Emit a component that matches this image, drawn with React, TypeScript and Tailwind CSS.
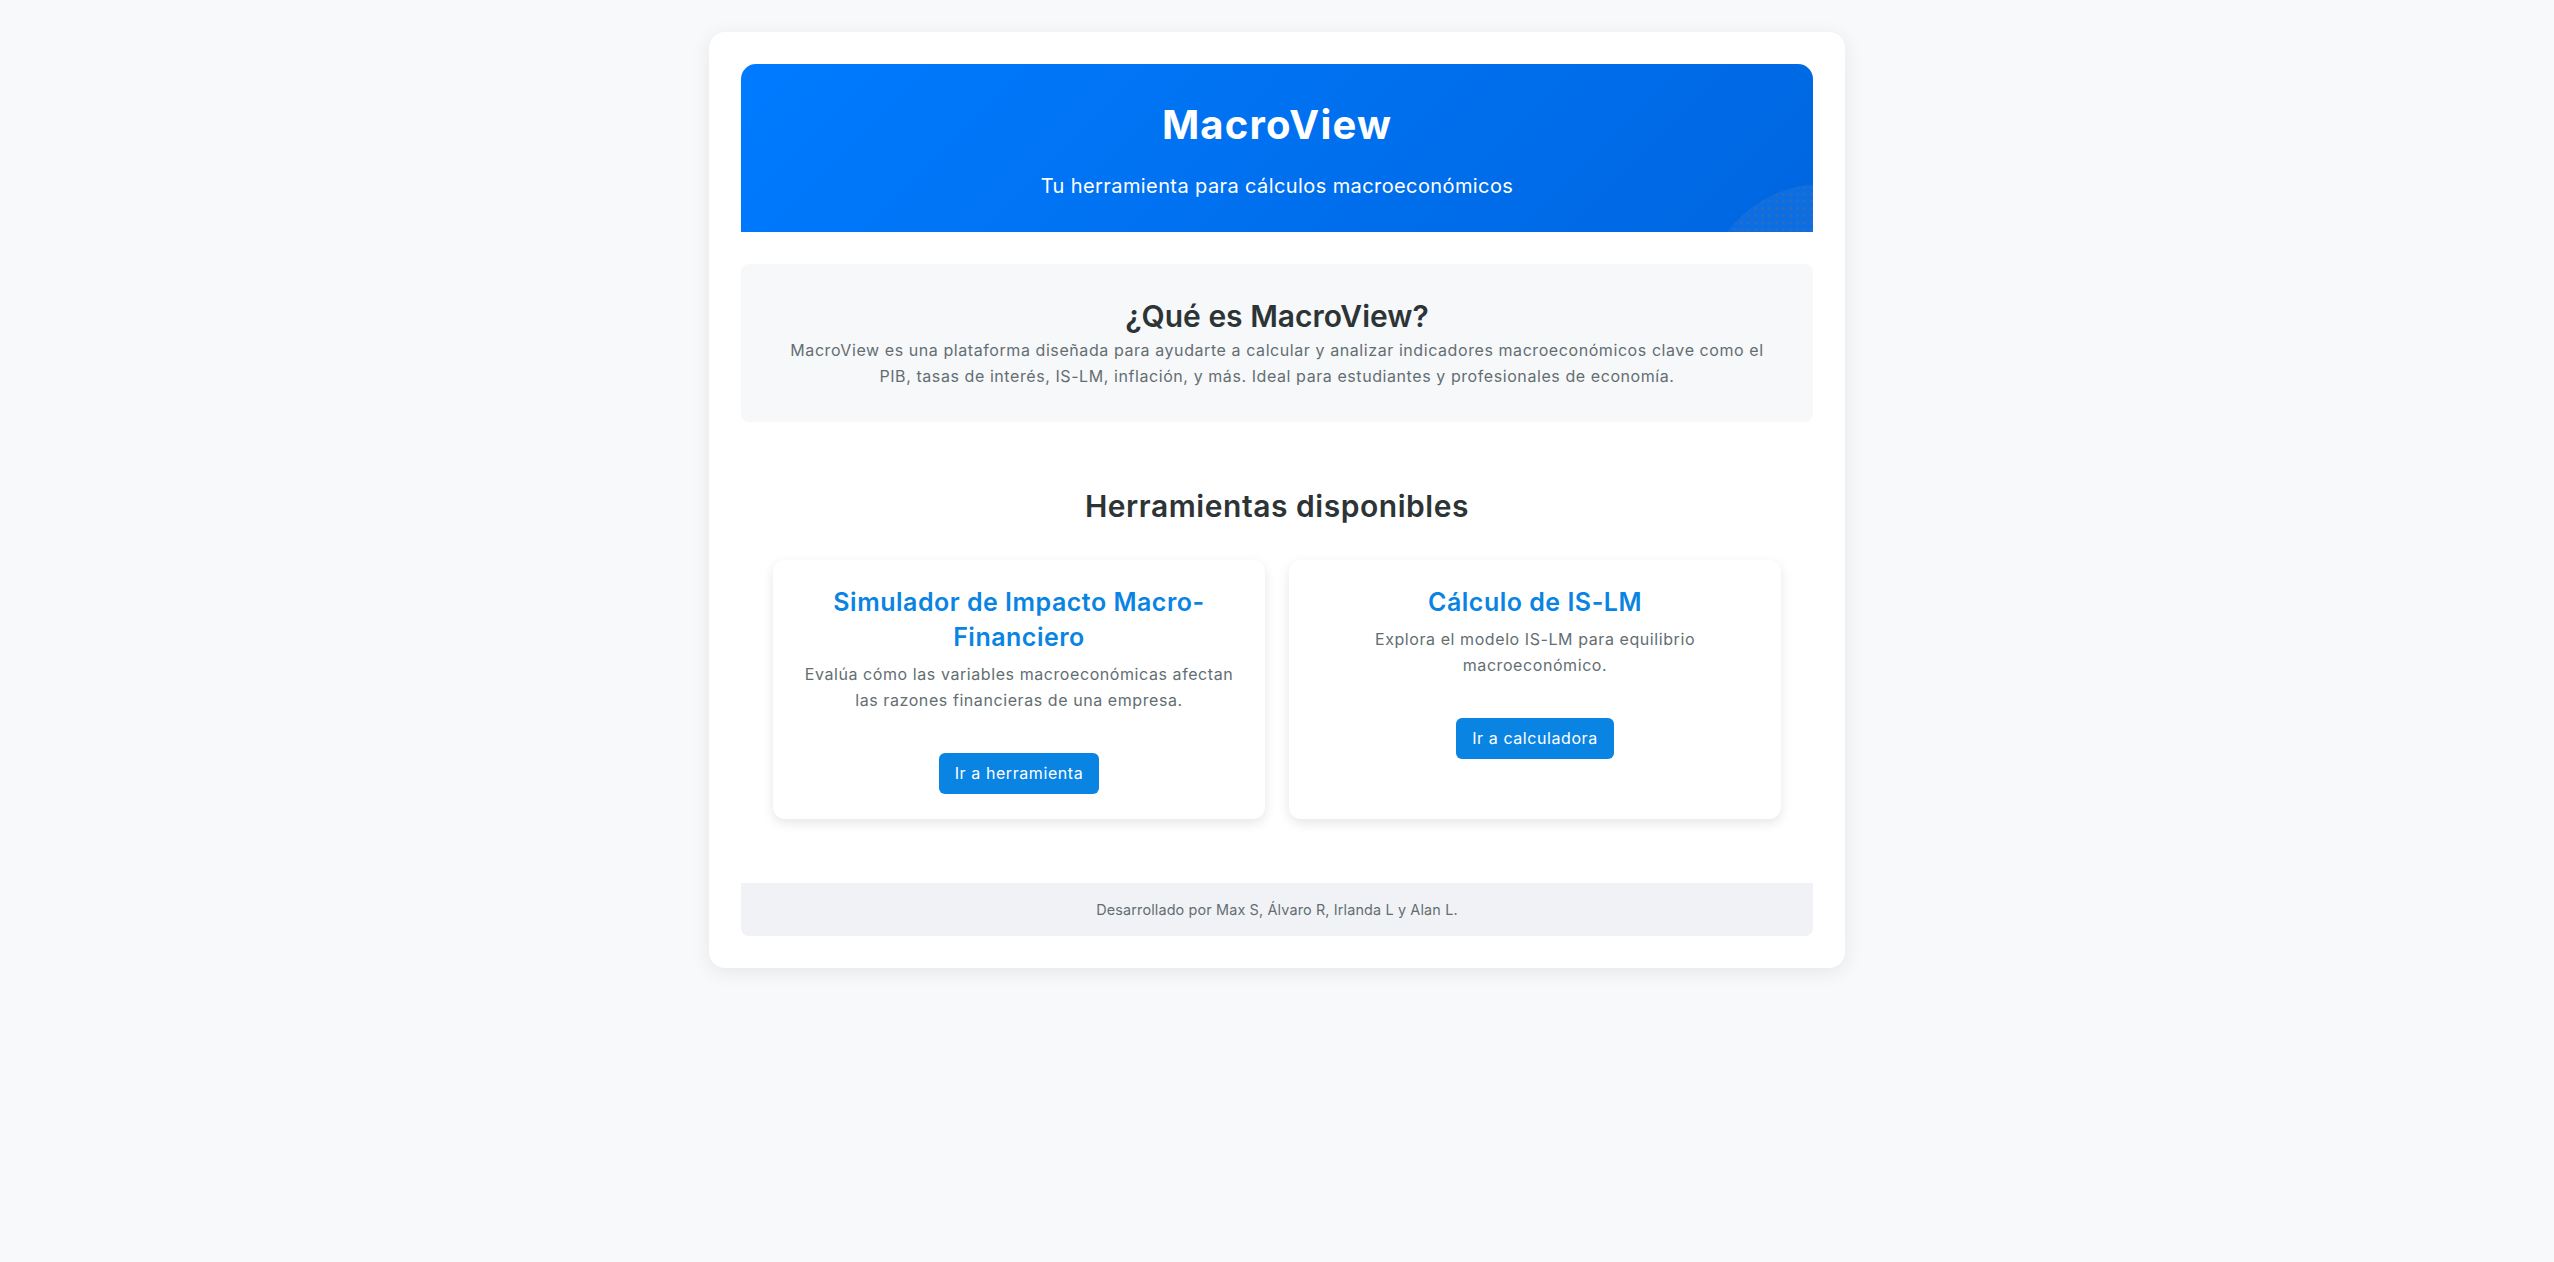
export default function App() {
  return (
    <div className="min-h-screen bg-[#f8f9fa] pt-8 pb-8 font-['Inter','Noto_Sans',sans-serif]">
      <div className="mx-auto w-[1136px] rounded-2xl bg-white p-8 shadow-[0_4px_20px_rgba(0,0,0,0.08)]">
        <header className="relative overflow-hidden rounded-t-[15px] bg-[linear-gradient(135deg,#007bff,#0066e0)] px-8 pt-[37px] pb-[32px] text-center text-white">
          <h1 className="text-[40px] leading-[48px] font-bold tracking-[0.03em]">MacroView</h1>
          <p className="mt-[23px] text-[20px] leading-[28px] tracking-[0.02em]">Tu herramienta para cálculos macroeconómicos</p>
          <div className="pointer-events-none absolute right-[-130px] bottom-[-192px] h-[240px] w-[240px] rounded-full bg-white/5 bg-[radial-gradient(circle,rgba(90,110,140,0.45)_1px,transparent_1.5px)] bg-[length:7px_7px]" />
        </header>

        <section className="mt-8 rounded-lg bg-[#f7f8fa] px-9 pt-[34px] pb-[33px] text-center">
          <h2 className="text-[30px] leading-[36px] font-semibold text-[#2d3436]">¿Qué es MacroView?</h2>
          <p className="mt-[4px] text-[16px] leading-[25.6px] tracking-[0.036em] text-[#636e72]">
            MacroView es una plataforma diseñada para ayudarte a calcular y analizar indicadores macroeconómicos clave como el PIB, tasas de interés, IS-LM, inflación, y más. Ideal para estudiantes y profesionales de economía.
          </p>
        </section>

        <section className="px-8 pt-[66px]">
          <h2 className="text-center text-[30px] leading-[36px] font-semibold tracking-[0.018em] text-[#2d3436]">Herramientas disponibles</h2>
          <div className="mt-[36px] grid grid-cols-2 gap-6">
            <div className="rounded-xl bg-white px-6 pt-[25px] pb-[25px] text-center shadow-[0_4px_12px_rgba(0,0,0,0.1)]">
              <h3 className="text-[25px] leading-[35px] font-semibold tracking-[0.02em] text-[#0984e3]">Simulador de Impacto Macro-Financiero</h3>
              <p className="mt-[7px] text-[16px] leading-[25.6px] tracking-[0.036em] text-[#636e72]">
                Evalúa cómo las variables macroeconómicas afectan las razones financieras de una empresa.
              </p>
              <div className="mt-[40px]">
                <button className="rounded-md bg-[#0984e3] px-4 py-2 text-[16px] leading-[25px] tracking-[0.036em] text-white">Ir a herramienta</button>
              </div>
            </div>
            <div className="rounded-xl bg-white px-6 pt-[25px] pb-[25px] text-center shadow-[0_4px_12px_rgba(0,0,0,0.1)]">
              <h3 className="text-[25px] leading-[35px] font-semibold tracking-[0.02em] text-[#0984e3]">Cálculo de IS-LM</h3>
              <p className="mt-[7px] text-[16px] leading-[25.6px] tracking-[0.036em] text-[#636e72]">
                Explora el modelo IS-LM para equilibrio macroeconómico.
              </p>
              <div className="mt-[40px]">
                <button className="rounded-md bg-[#0984e3] px-4 py-2 text-[16px] leading-[25px] tracking-[0.036em] text-white">Ir a calculadora</button>
              </div>
            </div>
          </div>
        </section>

        <footer className="mt-16 rounded-b-lg bg-[#f1f2f6] py-[15px] text-center text-[14.4px] leading-[23px] tracking-[0.01em] text-[#636e72]">
          Desarrollado por Max S, Álvaro R, Irlanda L y Alan L.
        </footer>
      </div>
    </div>
  );
}
